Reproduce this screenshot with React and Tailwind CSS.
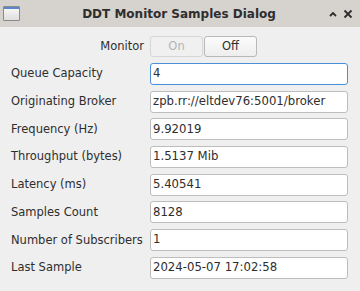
import React from 'react'

const rows = [
  ['Queue Capacity', '4', true],
  ['Originating Broker', 'zpb.rr://eltdev76:5001/broker'],
  ['Frequency (Hz)', '9.92019'],
  ['Throughput (bytes)', '1.5137 Mib'],
  ['Latency (ms)', '5.40541'],
  ['Samples Count', '8128'],
  ['Number of Subscribers', '1'],
  ['Last Sample', '2024-05-07 17:02:58'],
]

export default function App() {
  return (
    <div className="w-[360px] h-[291px] bg-[#efefef] flex flex-col text-[#2e2e2e] overflow-hidden" style={{ fontFamily: '"DejaVu Sans", sans-serif' }}>
      {/* Title bar */}
      <div className="h-[27px] bg-[#d6d2ce] flex items-center px-[3px] shrink-0">
        <div className="w-[17px] h-[15px] border border-[#8a8a8a] rounded-[1px] bg-gradient-to-b from-[#fafafa] to-[#dedede] flex flex-col">
          <div className="h-[2px] bg-[#5b86c8]" />
        </div>
        <div className="flex-1 text-center text-[12px] font-bold text-[#2e2e2e] pl-[10px]">DDT Monitor Samples Dialog</div>
        <div className="flex items-center gap-[5px] pr-[4px]">
          <svg width="10" height="10" viewBox="0 0 10 10">
            <path d="M2 7 L5 4 L8 7" fill="none" stroke="#2e2e2e" strokeWidth="1.8" />
          </svg>
          <svg width="10" height="10" viewBox="0 0 10 10">
            <path d="M1.5 1.5 L8.5 8.5 M8.5 1.5 L1.5 8.5" fill="none" stroke="#2e2e2e" strokeWidth="1.8" />
          </svg>
        </div>
      </div>

      {/* Body */}
      <div className="flex flex-col pt-[9px]">
        <div className="flex items-center h-[21px]">
          <div className="w-[144px] text-right text-[11.5px]">Monitor</div>
          <div className="flex ml-[6px]">
            <button className="w-[53px] h-[21px] border border-[#d6d6d6] rounded-[3px] bg-[#f0f0f0] text-[11.5px] text-[#b4b4b4]">On</button>
            <button className="w-[53px] h-[21px] ml-[1px] border border-[#b8b8b8] rounded-[3px] bg-gradient-to-b from-[#fbfbfb] to-[#eeeeee] text-[11.5px] text-[#2e2e2e]">Off</button>
          </div>
        </div>

        <div className="flex flex-col gap-[5.7px] mt-[6px]">
          {rows.map(([label, value, focus]) => (
            <div key={label} className="flex items-center h-[22px]">
              <div className="w-[150px] pl-[11px] text-[11.5px] whitespace-nowrap">{label}</div>
              <div className={`w-[198px] h-[22px] rounded-[3px] bg-white flex items-center pl-[2px] text-[11.7px] ${focus ? 'border border-[#4a90d9]' : 'border border-[#bdbdbd]'}`}>
                {value}
              </div>
            </div>
          ))}
        </div>
      </div>
    </div>
  )
}
